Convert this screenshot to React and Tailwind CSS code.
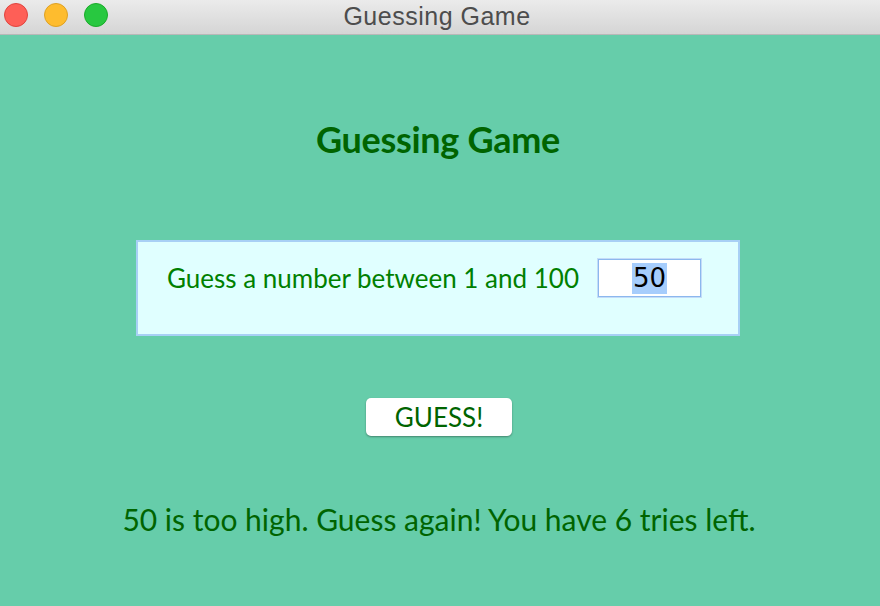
import React from 'react';

const App = () => {
    return (
        <div className="w-[880px] h-[606px] flex flex-col bg-[#66cdaa] overflow-hidden" style={{ fontFamily: 'Lato, sans-serif' }}>
            {/* window title bar */}
            <div className="relative h-[35px] flex items-center justify-center bg-gradient-to-b from-[#ebebeb] to-[#d5d5d5] border-b border-[#b8b8b8]">
                <div className="absolute left-[4px] top-[3px] flex gap-[16px]">
                    <span className="w-[24px] h-[24px] rounded-full bg-[#fe5f57] border border-[#e0443e]" />
                    <span className="w-[24px] h-[24px] rounded-full bg-[#febc2e] border border-[#dea123]" />
                    <span className="w-[24px] h-[24px] rounded-full bg-[#28c840] border border-[#1aab29]" />
                </div>
                <span className="ml-[-6px] mt-[-1px] text-[25px] text-[#4d4d4d] leading-none tracking-[0.5px]" style={{ fontFamily: '"Liberation Sans", Arial, sans-serif' }}>Guessing Game</span>
            </div>

            <h1 className="mt-[86px] ml-[-4px] text-center text-[36px] font-bold text-[#006400] leading-none tracking-[-0.3px]">Guessing Game</h1>

            <div className="mt-[83px] ml-[136px] w-[604px] h-[96px] bg-[#e0ffff] border-2 border-[#a8d0f5] flex items-start pt-[17px] pl-[29px]">
                <span className="text-[26px] text-[#008000] leading-[38px]">Guess a number between 1 and 100</span>
                <div className="ml-[19px] w-[103px] h-[38px] bg-white border border-[#8cb8ee] shadow-[0_0_0_1px_#c4dcf8] flex items-center justify-center">
                    <span className="bg-[#a6cdfc] text-black text-[26px] leading-[31px] px-[1px]" style={{ fontFamily: '"DejaVu Sans", sans-serif' }}>50</span>
                </div>
            </div>

            <div className="mt-[62px] ml-[366px] flex">
                <button className="w-[146px] h-[38px] bg-white rounded-[5px] shadow-[0_1px_2px_rgba(0,0,0,0.35)] text-[26px] text-[#006400] leading-none">GUESS!</button>
            </div>

            <p className="mt-[68px] ml-[-2px] text-center text-[30px] text-[#006400] leading-none">50 is too high. Guess again! You have 6 tries left.</p>
        </div>
    );
};

export default App;
